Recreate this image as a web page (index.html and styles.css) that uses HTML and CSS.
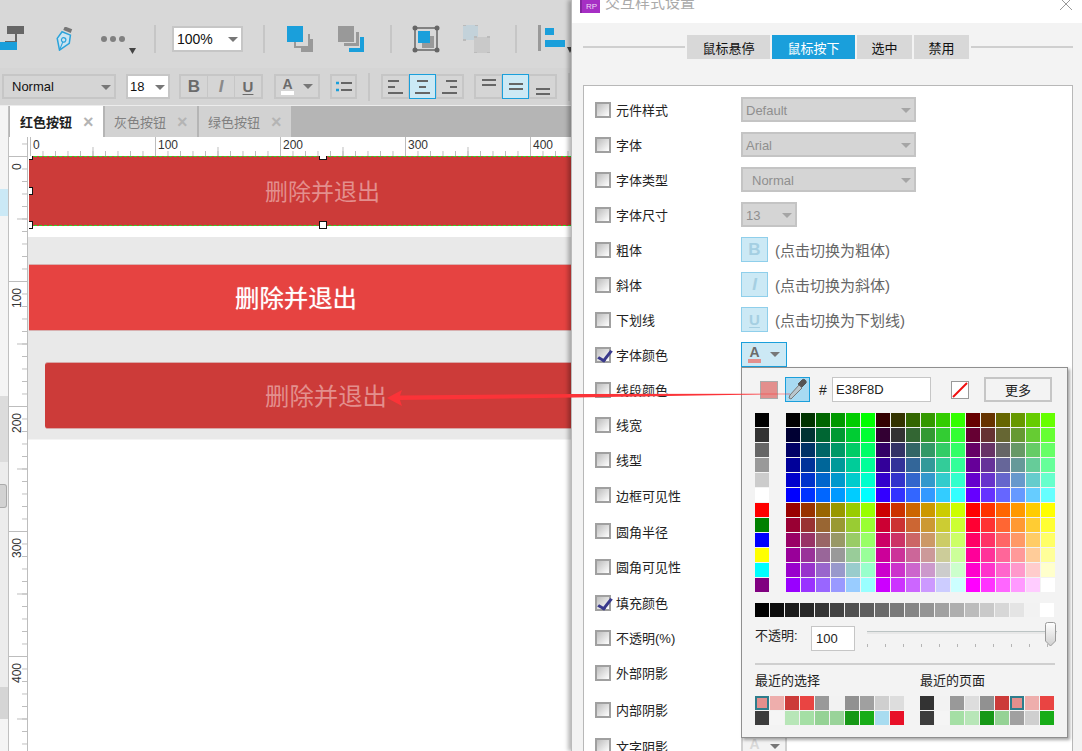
FILE: index.html
```html
<!DOCTYPE html>
<html lang="zh">

<head>
    <meta charset="utf-8">
    <meta name="viewport" content="width=device-width, initial-scale=1.0">
    <title>交互样式设置</title>
    <link rel="stylesheet" href="styles.css">
</head>

<body>
    <div class="app">
        <div class="toolbar toolbar-top">
            <svg class="ic-org" width="24" height="26" viewBox="0 0 24 26">
                <rect x="7" y="0" width="17" height="8" fill="#666"/>
                <path d="M16 8v8H5M1 16" fill="none" stroke="#666" stroke-width="2"/>
                <rect x="0" y="16" width="17" height="8" fill="#1a9fdb"/>
            </svg>
            <svg class="ic-pen" width="18" height="24" viewBox="0 0 18 24">
                <g transform="rotate(22 9 12)">
                    <rect x="5" y="0" width="8" height="4" fill="#777"/>
                    <path d="M4.5 6h9l2 8L9 24 2.500 14z" fill="#cbe4f1" stroke="#2ba3da" stroke-width="1.500"/>
                    <circle cx="9" cy="13" r="2.200" fill="none" stroke="#2ba3da" stroke-width="1.200"/>
                    <path d="M9 15v8" stroke="#2ba3da"/>
                </g>
            </svg>
            <svg class="ic-more" width="38" height="20" viewBox="0 0 38 20">
                <circle cx="4" cy="4" r="3" fill="#808080"/>
                <circle cx="13" cy="4" r="3" fill="#808080"/>
                <circle cx="22" cy="4" r="3" fill="#808080"/>
                <path d="M29 13h7l-3.500 6z" fill="#444"/>
            </svg>
            <div class="tb-divide d1"></div>
            <div class="select select-zoom">100%</div>
            <div class="tb-divide d2"></div>
            <svg class="ic-front" width="26" height="26" viewBox="0 0 26 26">
                <path d="M16 8h5v12h-12v-5h-2v7h16V8z" fill="#999"/>
                <path d="M21 13h5v13H14v-4h8V13z" fill="#999"/>
                <rect x="0" y="0" width="16" height="16" fill="#1a9fdb"/>
            </svg>
            <svg class="ic-back" width="26" height="26" viewBox="0 0 26 26">
                <rect x="0" y="0" width="16" height="16" fill="#999"/>
                <path d="M18 6h3v14H6v-3h12z" fill="#999"/>
                <path d="M22 11h4v15H11v-4h11z" fill="#1a9fdb"/>
            </svg>
            <div class="tb-divide d3"></div>
            <svg class="ic-group" width="28" height="28" viewBox="0 0 28 28">
                <rect x="3" y="3" width="22" height="22" fill="none" stroke="#666" stroke-width="1.500"/>
                <circle cx="3" cy="3" r="2.500" fill="#666"/>
                <circle cx="25" cy="3" r="2.500" fill="#666"/>
                <circle cx="3" cy="25" r="2.500" fill="#666"/>
                <circle cx="25" cy="25" r="2.500" fill="#666"/>
                <rect x="10" y="11" width="12" height="12" fill="#999"/>
                <rect x="6" y="6" width="12" height="12" fill="#1a9fdb"/>
            </svg>
            <svg class="ic-ungroup" width="28" height="28" viewBox="0 0 28 28">
                <rect x="0" y="0" width="15" height="15" fill="#c3d2da"/>
                <rect x="11" y="12" width="16" height="16" fill="#c9c9c9"/>
                <path d="M0 0h3M12 0h3M0 15h3M11 12h3M24 12h3M11 28h3M24 28h3" stroke="#bbb" stroke-width="2"/>
            </svg>
            <div class="tb-divide d4"></div>
            <svg class="ic-align" width="38" height="28" viewBox="0 0 38 28">
                <rect x="0" y="0" width="3" height="26" fill="#999"/>
                <rect x="7" y="3" width="9" height="7" fill="#1a9fdb"/>
                <rect x="7" y="15" width="20" height="7" fill="#1a9fdb"/>
                <path d="M29 22h6l-3 6z" fill="#444"/>
            </svg>
        </div>

        <div class="toolbar toolbar-format">
            <div class="select select-style">Normal</div>
            <div class="select select-size">18</div>
            <div class="seg seg-font">
                <button class="seg-btn glyph-b">B</button>
                <button class="seg-btn glyph-i">I</button>
                <button class="seg-btn glyph-u">U</button>
            </div>
            <button class="color-btn color-top"><span class="glyph-a">A</span><span class="caret"></span></button>
            <button class="list-btn">
                <svg width="16" height="12" viewBox="0 0 16 12">
                    <path d="M0 2h3M0 9h3" stroke="#1a9fdb" stroke-width="2.500"/>
                    <path d="M5 2h11M5 9h11" stroke="#666" stroke-width="2"/>
                </svg>
            </button>
            <div class="tb-divide d5"></div>
            <div class="seg seg-align">
                <button class="seg-btn"><svg width="15" height="14" viewBox="0 0 15 14"><path d="M0 1h11M0 7h7M0 13h15" stroke="#666" stroke-width="2"/></svg></button>
                <button class="seg-btn on"><svg width="15" height="14" viewBox="0 0 15 14"><path d="M2 1h11M4 7h7M0 13h15" stroke="#666" stroke-width="2"/></svg></button>
                <button class="seg-btn"><svg width="15" height="14" viewBox="0 0 15 14"><path d="M4 1h11M8 7h7M0 13h15" stroke="#666" stroke-width="2"/></svg></button>
            </div>
            <div class="seg seg-valign">
                <button class="seg-btn"><svg width="14" height="20" viewBox="0 0 14 20"><path d="M0 3h14M0 8h14" stroke="#666" stroke-width="2"/></svg></button>
                <button class="seg-btn on"><svg width="14" height="20" viewBox="0 0 14 20"><path d="M0 7h14M0 12h14" stroke="#666" stroke-width="2"/></svg></button>
                <button class="seg-btn"><svg width="14" height="20" viewBox="0 0 14 20"><path d="M0 12h14M0 17h14" stroke="#666" stroke-width="2"/></svg></button>
            </div>
            <div class="tb-divide d6"></div>
        </div>

        <div class="workspace">
            <div class="side">
                <div class="side-sel"></div>
                <div class="side-grey">
                    <div class="side-thumb"></div>
                </div>
                <div class="side-end"></div>
            </div>
            <div class="center">
                <div class="tabs">
                    <div class="tab valgt">红色按钮<span class="tab-x">×</span></div>
                    <div class="tab">灰色按钮<span class="tab-x">×</span></div>
                    <div class="tab">绿色按钮<span class="tab-x">×</span></div>
                </div>
                <div class="stage">
                    <div class="ruler-v">
                        <span class="mark-v first">0</span>
                        <span class="mark-v">100</span>
                        <span class="mark-v">200</span>
                        <span class="mark-v">300</span>
                        <span class="mark-v">400</span>
                    </div>
                    <div class="stage-main">
                        <div class="ruler-h">
                            <span class="mark-h">0</span>
                            <span class="mark-h">100</span>
                            <span class="mark-h">200</span>
                            <span class="mark-h">300</span>
                            <span class="mark-h">400</span>
                        </div>
                        <div class="canvas">
                            <div class="btn-selected">
                                删除并退出
                                <i class="handle h-tl"></i>
                                <i class="handle h-tm"></i>
                                <i class="handle h-ml"></i>
                                <i class="handle h-bl"></i>
                                <i class="handle h-bm"></i>
                            </div>
                            <div class="canvas-grey">
                                <div class="btn-normal">删除并退出</div>
                                <div class="btn-pressed">删除并退出</div>
                            </div>
                        </div>
                    </div>
                </div>
            </div>
        </div>
    </div>

    <div class="dialog">
        <div class="titlebar">
            <div class="rp-logo">RP</div>
            <div class="title">交互样式设置</div>
            <svg class="close" width="14" height="14" viewBox="0 0 14 14"><path d="M1 1l12 12M13 1L1 13" stroke="#999" stroke-width="1"/></svg>
        </div>
        <div class="dialog-body">
            <nav class="state-tabs">
                <div class="state-line"></div>
                <button class="state state-wide">鼠标悬停</button>
                <button class="state state-wide valgt">鼠标按下</button>
                <button class="state">选中</button>
                <button class="state">禁用</button>
                <div class="state-line"></div>
            </nav>
            <section class="panel">
                <div class="rows">
                    <div class="row"><i class="check"></i><label>元件样式</label><div class="select select-off w-175">Default</div></div>
                    <div class="row"><i class="check"></i><label>字体</label><div class="select select-off w-175">Arial</div></div>
                    <div class="row"><i class="check"></i><label>字体类型</label><div class="select select-off w-175 indent">Normal</div></div>
                    <div class="row"><i class="check"></i><label>字体尺寸</label><div class="select select-off w-56">13</div></div>
                    <div class="row"><i class="check"></i><label>粗体</label><button class="toggle glyph-b">B</button><span class="hint">(点击切换为粗体)</span></div>
                    <div class="row"><i class="check"></i><label>斜体</label><button class="toggle glyph-i">I</button><span class="hint">(点击切换为斜体)</span></div>
                    <div class="row"><i class="check"></i><label>下划线</label><button class="toggle glyph-u">U</button><span class="hint">(点击切换为下划线)</span></div>
                    <div class="row"><i class="check on"></i><label>字体颜色</label><button class="color-btn color-open"><span class="glyph-a">A</span><span class="caret"></span></button></div>
                    <div class="row"><i class="check"></i><label>线段颜色</label></div>
                    <div class="row"><i class="check"></i><label>线宽</label></div>
                    <div class="row"><i class="check"></i><label>线型</label></div>
                    <div class="row"><i class="check"></i><label>边框可见性</label></div>
                    <div class="row"><i class="check"></i><label>圆角半径</label></div>
                    <div class="row"><i class="check"></i><label>圆角可见性</label></div>
                    <div class="row"><i class="check on"></i><label>填充颜色</label></div>
                    <div class="row"><i class="check"></i><label>不透明(%)</label></div>
                    <div class="row"><i class="check"></i><label>外部阴影</label></div>
                    <div class="row"><i class="check"></i><label>内部阴影</label></div>
                    <div class="row"><i class="check"></i><label>文字阴影</label><button class="color-btn color-off"><span class="glyph-a">A</span><span class="caret"></span></button></div>
                </div>

                <div class="picker">
                    <div class="picker-top">
                        <div class="current"></div>
                        <button class="dropper">
                            <svg width="23" height="23" viewBox="0 0 23 23">
                                <path d="M5 21l-2-1 1-3 9-10 3 3-10 10z" fill="#b9c6cc" stroke="#777"/>
                                <path d="M12 6l4-4c2-2 5 1 4 3l-4 4z" fill="#555" stroke="#555"/>
                            </svg>
                        </button>
                        <span class="hash">#</span>
                        <div class="hex">E38F8D</div>
                        <div class="no-color">
                            <svg width="16" height="16" viewBox="0 0 16 16"><path d="M1 15L15 1" stroke="#f01010" stroke-width="2"/></svg>
                        </div>
                        <button class="more">更多</button>
                    </div>
                    <div class="palette">
                        <div class="swatches basic" id="basic"></div>
                        <div class="swatches safe" id="safe"></div>
                    </div>
                    <div class="swatches greys" id="greys"></div>
                    <div class="opacity">
                        <span class="opacity-label">不透明:</span>
                        <div class="opacity-input">100</div>
                        <div class="slider">
                            <div class="slider-track"></div>
                            <div class="slider-ticks"></div>
                            <svg class="slider-thumb" width="13" height="28" viewBox="0 0 13 28">
                                <defs><linearGradient id="thumb" x1="0" y1="0" x2="0" y2="1"><stop offset="0" stop-color="#fff"/><stop offset="1" stop-color="#cfcfcf"/></linearGradient></defs>
                                <path d="M1.500 2.500q0-2 2-2h6q2 0 2 2V19l-5 5-5-5z" fill="url(#thumb)" stroke="#9a9a9a"/>
                            </svg>
                        </div>
                    </div>
                    <div class="picker-line"></div>
                    <div class="recent">
                        <div class="recent-col">
                            <h4>最近的选择</h4>
                            <div class="swatches recent-grid" id="recentPicked"></div>
                        </div>
                        <div class="recent-col">
                            <h4>最近的页面</h4>
                            <div class="swatches recent-grid nine" id="recentPage"></div>
                        </div>
                    </div>
                </div>
            </section>
        </div>
    </div>

    <svg class="arrow" width="420" height="24" viewBox="0 0 420 24">
        <path d="M2 13L17 5l-2 5.500L190 9l185-.2v.7L190 12.500 15 15l2 6z" fill="#fb3338"/>
        <path d="M375 9h30" stroke="#fb3338" stroke-opacity=".5"/>
    </svg>

    <script>
        const hex = ["00", "33", "66", "99", "cc", "ff"];

        function addSwatch(parent, colour, marked) {
            const swatch = document.createElement("div");
            swatch.className = marked ? "swatch marked" : "swatch";
            swatch.style.background = colour;
            parent.appendChild(swatch);
        }

        const basic = ["#000", "#333", "#666", "#999", "#ccc", "#fff", "#f00", "#008000", "#00f", "#ff0", "#0ff", "#800080"];
        basic.forEach(c => addSwatch(document.querySelector("#basic"), c));

        // 18 x 12 web safe colours, red changes per block, green per column, blue per row
        for (let half = 0; half < 2; half++) {
            for (let b = 0; b < 6; b++) {
                for (let r = half * 3; r < half * 3 + 3; r++) {
                    for (let g = 0; g < 6; g++) {
                        addSwatch(document.querySelector("#safe"), "#" + hex[r] + hex[g] + hex[b]);
                    }
                }
            }
        }

        for (let i = 0; i < 20; i++) {
            const v = Math.round(i * 255 / 19);
            addSwatch(document.querySelector("#greys"), "rgb(" + v + "," + v + "," + v + ")");
        }

        const picked = ["#e38f8d", "#eeaeac", "#cc3b39", "#e94442", "#999", "#f2f2f2", "#919191", "#a0a0a0", "#cfcfcf", "#ddd",
            "#3c3c3c", "#f5f5f5", "#b8e6b8", "#a5dfa5", "#95d295", "#99d399", "#169816", "#18ac18", "#a8dcf0", "#e81028"];
        picked.forEach((c, i) => addSwatch(document.querySelector("#recentPicked"), c, i == 0));

        const onPage = ["#333", "#f2f2f2", "#999", "#ddd", "#919191", "#cc3b39", "#e38f8d", "#eeaeac", "#e94442",
            "#3c3c3c", "#f5f5f5", "#a5dfa5", "#b8e6b8", "#169816", "#95d295", "#a0a0a0", "#cfcfcf", "#18ac18"];
        onPage.forEach((c, i) => addSwatch(document.querySelector("#recentPage"), c, i == 6));
    </script>
</body>

</html>
```

FILE: styles.css
```css
* {
    box-sizing: border-box;
}

html,
body {
    margin: 0;
    height: 751px;
    overflow: hidden;
}

body {
    position: relative;
    display: flex;
    width: 1082px;
    font-family: "Liberation Sans", "Noto Sans CJK SC", sans-serif;
    font-size: 13px;
    color: #222;
    background: #fff;
}

button {
    padding: 0;
    font: inherit;
    color: inherit;
}

/* left window */
.app {
    display: flex;
    flex-direction: column;
    flex: none;
    width: 571px;
    background: #d8d8d8;
}

.toolbar {
    display: flex;
    flex: none;
    align-items: center;
    white-space: nowrap;
    overflow: hidden;
}

.toolbar svg {
    flex: none;
}

.toolbar-top {
    height: 68px;
    padding-top: 10px;
    background: #d8d8d8;
}

.ic-pen {
    margin-left: 31px;
}

.ic-more {
    margin-left: 27px;
    margin-top: 12px;
}

.ic-front {
    margin-left: 22px;
}

.ic-back {
    margin-left: 25px;
}

.ic-group {
    margin-left: 20px;
}

.ic-ungroup {
    margin-left: 23px;
}

.ic-align {
    margin-left: 21px;
}

.tb-divide {
    flex: none;
    width: 2px;
    height: 28px;
    background: #c6c6c6;
}

.d1 {
    margin-left: 16px;
}

.d2 {
    margin-left: 20px;
}

.d3 {
    margin-left: 26px;
}

.d4 {
    margin-left: 24px;
}

.d5 {
    margin-left: 11px;
}

.d6 {
    margin-left: 11px;
}

.select {
    position: relative;
    flex: none;
    display: flex;
    align-items: center;
    padding-left: 5px;
    background: #fff;
    border: 2px solid #c6c6c6;
    color: #111;
}

.select::after {
    content: "";
    position: absolute;
    right: 3px;
    top: 50%;
    margin-top: -2px;
    border-left: 5px solid transparent;
    border-right: 5px solid transparent;
    border-top: 5px solid #777;
}

.select-zoom {
    width: 71px;
    height: 26px;
    margin-left: 16px;
    padding-left: 3px;
    font-size: 14px;
}

.toolbar-format {
    height: 38px;
    padding: 0 0 0 2px;
    background: #d5d5d5;
    border-bottom: 1px solid #ececec;
}

.select-style {
    width: 114px;
    height: 25px;
    padding-left: 8px;
    background: #d5d5d5;
}

.select-size {
    width: 44px;
    height: 25px;
    margin-left: 10px;
    padding-left: 2px;
}

.seg {
    display: flex;
    flex: none;
    height: 25px;
    background: #c6c6c6;
    border: 2px solid #c6c6c6;
}

.seg-font {
    width: 84px;
    margin-left: 9px;
}

.seg-align {
    width: 83px;
    margin-left: 11px;
}

.seg-valign {
    width: 83px;
    margin-left: 10px;
}

.seg-btn {
    display: flex;
    flex: 1;
    align-items: center;
    justify-content: center;
    margin-left: 1px;
    border: 0;
    background: #d5d5d5;
}

.seg-btn:first-child {
    margin-left: 0;
}

.seg-btn.on {
    margin: -2px 0 -2px 1px;
    background: #cce9f5;
    border: 1px solid #1a9fdb;
}

.glyph-b {
    font-weight: bold;
    font-size: 17px;
    color: #6b6b6b;
}

.glyph-i {
    font-weight: bold;
    font-style: italic;
    font-size: 17px;
    color: #8a8a8a;
}

.glyph-u {
    font-weight: bold;
    font-size: 15px;
    color: #6b6b6b;
    text-decoration: underline;
    text-underline-offset: 2px;
}

.color-btn {
    display: flex;
    flex: none;
    align-items: center;
    justify-content: center;
    gap: 9px;
    width: 46px;
    height: 25px;
    background: #d5d5d5;
    border: 2px solid #c6c6c6;
}

.color-top {
    margin-left: 11px;
}

.glyph-a {
    display: block;
    height: 17px;
    padding: 0 1px;
    font-size: 14px;
    line-height: 13px;
    font-weight: bold;
    color: #6b6b6b;
    border-bottom: 4px solid #fff;
}

.caret {
    border-left: 5px solid transparent;
    border-right: 5px solid transparent;
    border-top: 5px solid #777;
}

.list-btn {
    display: flex;
    flex: none;
    align-items: center;
    justify-content: center;
    width: 27px;
    height: 25px;
    margin-left: 10px;
    background: #d5d5d5;
    border: 2px solid #c6c6c6;
}

/* work area */
.workspace {
    display: flex;
    flex: 1;
    min-height: 0;
}

.side {
    flex: none;
    width: 9px;
    padding-top: 83px;
    background: #f4f4f4;
    border-right: 1px solid #c0c0c0;
}

.side-sel {
    height: 27px;
    background: #cbe9f6;
}

.side-grey {
    height: 291px;
    margin-top: 180px;
    padding-top: 88px;
    background: linear-gradient(#dcdcdc 66px, #ececec 66px);
}

.side-thumb {
    width: 7px;
    height: 24px;
    background: #d2d2d2;
    border: 1px solid #aaa;
    border-left: 0;
    border-radius: 0 3px 3px 0;
}

.side-end {
    height: 32px;
    background: #d5d5d5;
}

.center {
    display: flex;
    flex: 1;
    flex-direction: column;
    min-width: 0;
    background: #fff;
}

.tabs {
    display: flex;
    flex: none;
    height: 31px;
    padding-left: 1px;
    gap: 2px;
    background: #b5b5b5;
}

.tab {
    display: flex;
    align-items: center;
    width: 92px;
    padding-left: 9px;
    background: #d2d2d2;
    color: #808080;
    font-size: 13px;
}

.tab.valgt {
    width: 93px;
    padding-left: 10px;
    background: #fff;
    color: #222;
    font-weight: bold;
}

.tab-x {
    margin-left: 11px;
    font-size: 18px;
    line-height: 1;
    font-weight: bold;
    color: #b4b4b4;
}

.stage {
    display: flex;
    flex: 1;
    min-height: 0;
}

.ruler-v {
    display: flex;
    flex: none;
    flex-direction: column;
    width: 19px;
    padding-top: 19px;
    border-right: 1px solid #bdbdbd;
    background-image:
        linear-gradient(#bdbdbd 1px, transparent 1px),
        linear-gradient(#bdbdbd 1px, transparent 1px);
    background-size: 5px 12.5px, 10px 62.5px;
    background-position: right 0 top 19px, right 0 top 19px;
    background-repeat: repeat-y;
}

.mark-v {
    flex: none;
    height: 125px;
    writing-mode: vertical-rl;
    transform: rotate(180deg);
    font-size: 12px;
    line-height: 16px;
    text-align: right;
    padding-bottom: 6px;
    border-bottom: 1px solid #bdbdbd;
    color: #333;
}

.stage-main {
    display: flex;
    flex: 1;
    flex-direction: column;
    min-width: 0;
}

.ruler-h {
    display: flex;
    flex: none;
    height: 19px;
    padding-left: 2px;
    background-image:
        linear-gradient(to right, #bdbdbd 1px, transparent 1px),
        linear-gradient(to right, #bdbdbd 1px, transparent 1px);
    background-size: 12.5px 5px, 62.5px 9px;
    background-position: 2px bottom, 2px bottom;
    background-repeat: repeat-x;
}

.mark-h {
    flex: none;
    width: 125px;
    padding-left: 2px;
    border-left: 1px solid #bdbdbd;
    font-size: 12px;
    line-height: 17px;
    color: #333;
}

.canvas {
    flex: 1;
    padding-left: 1px;
}

.btn-selected {
    position: relative;
    display: flex;
    align-items: center;
    height: 70px;
    padding: 0 0 3px 236px;
    background: #cc3b39;
    border-top: 1px dashed #22e022;
    border-bottom: 1px dashed #22e022;
    color: #e38f8d;
    font-size: 23px;
}

.handle {
    position: absolute;
    width: 8px;
    height: 8px;
    background: #fff;
    border: 1px solid #111;
}

.h-tl {
    left: -4px;
    top: -5px;
    clip-path: inset(4px 0 0 4px);
}

.h-tm {
    left: 290px;
    top: -5px;
    clip-path: inset(4px 0 0 0);
}

.h-ml {
    left: -4px;
    top: 30px;
    clip-path: inset(0 0 0 4px);
}

.h-bl {
    left: -4px;
    top: 64px;
    clip-path: inset(0 0 0 4px);
}

.h-bm {
    left: 290px;
    top: 64px;
}

.canvas-grey {
    margin-top: 11px;
    margin-left: -1px;
    height: 202px;
    padding: 27px 0 0 1px;
    background: #e9e9e9;
    box-shadow: 0 1px 0 #f4f4f4;
}

.btn-normal {
    display: flex;
    align-items: center;
    height: 67px;
    padding: 0 0 2px 206px;
    background: #e64341;
    border-top: 1px solid #d8b0b0;
    border-bottom: 1px solid #d8b0b0;
    color: #fff;
    font-size: 24.400px;
    text-shadow: 0 0 1px rgba(255, 255, 255, .7);
}

.btn-pressed {
    display: flex;
    align-items: center;
    height: 67px;
    margin: 31px 0 0 16px;
    padding: 0 0 2px 220px;
    background: #cc3b39;
    border-radius: 3px 0 0 3px;
    border-top: 1px solid #d8a8a8;
    border-bottom: 1px solid #d8a8a8;
    color: #e38f8d;
    font-size: 24.400px;
}

/* dialog */
.dialog {
    position: relative;
    display: flex;
    flex: none;
    flex-direction: column;
    width: 511px;
    background: #f3f3f3;
    border-left: 1px solid #bbb;
    box-shadow: -3px 0 4px rgba(0, 0, 0, .28);
}

.titlebar {
    display: flex;
    flex: none;
    align-items: flex-start;
    height: 23px;
    padding-left: 8px;
    overflow: hidden;
    background: #fff;
}

.rp-logo {
    flex: none;
    width: 20px;
    height: 20px;
    margin-top: -7px;
    padding: 9px 0 0 4px;
    background: #a62fc4;
    border-left: 2px solid #8526a0;
    font-size: 8px;
    line-height: 10px;
    color: #eedcf5;
}

.title {
    margin: -7px 0 0 5px;
    font-size: 15px;
    line-height: 20px;
    color: #aaa;
}

.close {
    margin: -3px 0 0 auto;
    margin-right: 9px;
}

.dialog-body {
    flex: 1;
    padding: 12px 9px 0 11px;
}

.state-tabs {
    display: flex;
    align-items: center;
    height: 24px;
    gap: 2px;
}

.state-line {
    flex: 1;
    height: 2px;
    background: #cfcfcf;
}

.state {
    width: 55px;
    height: 24px;
    background: #d8d8d8;
    border: 0;
    color: #111;
    font-size: 13px;
}

.state-wide {
    width: 83px;
}

.state.valgt {
    background: #1a9fdb;
    color: #fff;
}

.panel {
    position: relative;
    margin-top: 26px;
    height: 700px;
    padding: 6px 0 0 11px;
    background: #fff;
    border: 1px solid #b8b8b8;
}

.rows {
    display: grid;
    grid-template-rows: repeat(11, 35px) 36px 36px 35px 37px 33px 37px 37px 36px;
}

.row {
    display: flex;
    align-items: center;
}

.row label {
    flex: none;
    width: 125px;
    margin-left: 5px;
    font-size: 13px;
    color: #222;
}

.check {
    position: relative;
    flex: none;
    width: 16px;
    height: 16px;
    background: linear-gradient(135deg, #bdbdbd, #fff);
    border: 2px solid #a0a0a0;
}

.check.on::after {
    content: "";
    position: absolute;
    left: 4px;
    top: -1px;
    width: 5px;
    height: 11px;
    border-right: 3px solid #3a3a8c;
    border-bottom: 3px solid #3a3a8c;
    transform: rotate(30deg) skewX(-8deg);
}

.select-off {
    height: 25px;
    padding: 1px 0 0 3px;
    background: #d5d5d5;
    border-color: #c4c4c4;
    color: #8f8f8f;
}

.select-off::after {
    border-top-color: #a5a5a5;
}

.w-175 {
    width: 175px;
}

.w-56 {
    width: 56px;
}

.indent {
    padding-left: 9px;
}

.toggle {
    flex: none;
    width: 27px;
    height: 25px;
    background: #cce9f5;
    border: 1px solid #8fcfeb;
}

.toggle.glyph-b,
.toggle.glyph-i,
.toggle.glyph-u {
    color: #a5cfe2;
}

.hint {
    margin-left: 7px;
    font-size: 15px;
    color: #666;
}

.color-open {
    background: #cce9f5;
    border: 1px solid #1a9fdb;
}

.color-open .glyph-a {
    border-bottom-color: #e38f8d;
}

.color-off {
    background: #f3f3f3;
    border-color: #d0d0d0;
}

.color-off .glyph-a {
    color: #d8d8d8;
    border-bottom-color: transparent;
}

/* colour picker popup */
.picker {
    position: absolute;
    left: 157px;
    top: 281px;
    width: 327px;
    height: 371px;
    padding: 9px 0 0 13px;
    background: #f3f3f3;
    border: 1px solid #8f8f8f;
    box-shadow: 2px 2px 3px rgba(0, 0, 0, .35);
}

.picker-top {
    display: flex;
    align-items: center;
    height: 25px;
}

.current {
    width: 18px;
    height: 18px;
    margin-left: 5px;
    background: #e38f8d;
    border: 1px solid #aaa;
}

.dropper {
    display: flex;
    align-items: center;
    justify-content: center;
    width: 25px;
    height: 25px;
    margin-left: 7px;
    background: #a8daf2;
    border: 1px solid #1a9fdb;
}

.hash {
    width: 13px;
    margin-left: 9px;
    font-size: 14px;
}

.hex {
    display: flex;
    align-items: center;
    width: 99px;
    height: 25px;
    padding-left: 3px;
    background: #fff;
    border: 1px solid #c6c6c6;
}

.no-color {
    width: 18px;
    height: 18px;
    margin-left: 20px;
    background: #fff;
    border: 1px solid #999;
}

.no-color svg {
    display: block;
}

.more {
    width: 68px;
    height: 25px;
    margin-left: 15px;
    background: #f3f3f3;
    border: 2px solid #c6c6c6;
    font-size: 13px;
}

.swatches {
    display: grid;
    gap: 1px;
    grid-auto-rows: 14px;
}

.palette {
    display: flex;
    margin-top: 11px;
}

.basic {
    grid-template-columns: 14px;
}

.safe {
    grid-template-columns: repeat(18, 14px);
    margin-left: 17px;
}

.greys {
    grid-template-columns: repeat(20, 14px);
    margin-top: 11px;
}

.swatch.marked {
    border: 2px solid #2e7d8c;
}

.opacity {
    display: flex;
    align-items: flex-start;
    height: 46px;
    padding-top: 9px;
}

.opacity-label {
    margin-top: -1px;
    width: 56px;
    font-size: 13px;
}

.opacity-input {
    display: flex;
    align-items: center;
    width: 44px;
    height: 25px;
    padding-left: 4px;
    background: #fff;
    border: 1px solid #c6c6c6;
}

.slider {
    position: relative;
    width: 190px;
    margin-left: 12px;
}

.slider-track {
    height: 3px;
    margin-top: 5px;
    background: #e8e8e8;
    border-top: 1px solid #bcc4c4;
}

.slider-ticks {
    height: 5px;
    margin-top: 10px;
    background-image: linear-gradient(to right, #b5b5b5 1px, transparent 1px);
    background-size: 18px 3px;
    background-repeat: repeat-x;
}

.slider-thumb {
    position: absolute;
    right: 0;
    top: -4px;
}

.picker-line {
    width: 300px;
    height: 2px;
    background: #cfcfcf;
}

.recent {
    display: flex;
    margin-top: 7px;
}

.recent-col {
    flex: none;
    width: 165px;
}

.recent-col h4 {
    margin: 0 0 6px;
    font-size: 13px;
    font-weight: normal;
    line-height: 18px;
}

.recent-grid {
    grid-template-columns: repeat(10, 14px);
}

.recent-grid.nine {
    grid-template-columns: repeat(9, 14px);
}

.arrow {
    position: absolute;
    left: 385px;
    top: 385px;
}
```
